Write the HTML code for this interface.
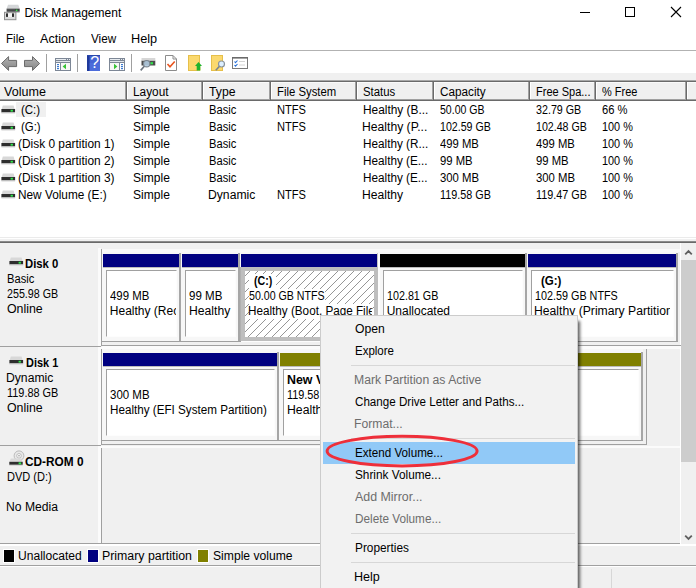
<!DOCTYPE html>
<html><head><meta charset="utf-8"><title>Disk Management</title>
<style>
html,body{margin:0;padding:0;background:#fff}
#w{position:relative;width:696px;height:588px;overflow:hidden;background:#fff;font-family:"Liberation Sans",sans-serif;font-size:12px;color:#000}
#w div,#w svg,#w span{position:absolute;display:block}
#w .t{white-space:pre;line-height:14px;height:14px;transform-origin:0 0}
</style></head><body><div id="w">
<svg style="left:570px;top:0;width:126px;height:28px" viewBox="570 0 126 28"><g stroke="#000" stroke-width="1" fill="none"><path d="M580 12.5H590"/><rect x="625.5" y="7.5" width="9" height="9"/><path d="M671 7L681 17M681 7L671 17" stroke-width="1.1"/></g></svg>
<svg style="left:3px;top:4px;width:18px;height:17px" viewBox="3 4 18 17"><path d="M8 4.8H18.3L19.6 8.6H6.7Z" fill="#d4d6d8"/><rect x="6.6" y="8.6" width="13.1" height="3.2" fill="#3f4142"/><rect x="7" y="9.3" width="8" height="1" fill="#5a5c5e"/><rect x="15.8" y="9.6" width="1.6" height="1.5" fill="#3df04f"/><rect x="15" y="11.8" width="4.7" height="1" fill="#b9bbbd"/><rect x="4.5" y="12.3" width="11.4" height="7.4" fill="#dcdcdc" stroke="#8f8f8f" stroke-width="1"/><rect x="8" y="13.5" width="4" height="3.5" fill="#f4f4f4"/><rect x="6" y="13.4" width="2" height="3.5" fill="#2e2e2e"/><rect x="12" y="13.4" width="2" height="3.5" fill="#2e2e2e"/></svg>
<div style="left:0px;top:50px;width:696px;height:1px;background:#b2b2b2;"></div>
<div style="left:0px;top:73px;width:696px;height:7px;background:#f0f0f0;"></div>
<svg style="left:0;top:51px;width:260px;height:22px" viewBox="0 51 260 22"><defs><linearGradient id="ag" x1="0" y1="0" x2="0" y2="1"><stop offset="0" stop-color="#b4b4b4"/><stop offset="1" stop-color="#858585"/></linearGradient></defs><path d="M1.5 63.5L8.6 56.6V60.4H16.6V66.6H8.6V70.4Z" fill="url(#ag)" stroke="#6a6a6a" stroke-width="1" stroke-linejoin="round"/><path d="M39.6 63.5L32.5 56.6V60.4H24.5V66.6H32.5V70.4Z" fill="url(#ag)" stroke="#6a6a6a" stroke-width="1" stroke-linejoin="round"/><path d="M46.5 54V72M77.5 54V72M131.5 54V72" stroke="#a0a0a0" stroke-width="1"/><rect x="55" y="58" width="16" height="13" fill="#7d8796"/><rect x="56" y="59" width="10" height="1" fill="#e8ecf0"/><rect x="67" y="59" width="1" height="1" fill="#e8ecf0"/><rect x="69" y="59" width="1" height="1" fill="#e8ecf0"/><rect x="56" y="61" width="14" height="1" fill="#dfe3e9"/><rect x="56" y="63" width="4" height="7" fill="#fff"/><rect x="61" y="63" width="9" height="7" fill="#f7f7f7"/><rect x="57" y="64" width="2" height="1.2" fill="#3b7ad0"/><rect x="57" y="66" width="2" height="1.2" fill="#3b7ad0"/><rect x="57" y="68" width="2" height="1.2" fill="#3b7ad0"/><path d="M62.6 66.5L66 63.8V69.2Z" fill="#36c236"/><rect x="87" y="55" width="13" height="16" fill="#4464d4"/><rect x="87" y="55" width="2.6" height="16" fill="#1f3a9c"/><rect x="87" y="55" width="13" height="1" fill="#2a48ac"/><rect x="89.6" y="63" width="10.4" height="8" fill="#5272de" opacity=".6"/><text x="94.7" y="68.3" font-family="Liberation Sans, sans-serif" font-size="16" fill="#fff" text-anchor="middle">?</text><rect x="109" y="58" width="16" height="13" fill="#7d8796"/><rect x="110" y="59" width="10" height="1" fill="#e8ecf0"/><rect x="121" y="59" width="1" height="1" fill="#e8ecf0"/><rect x="123" y="59" width="1" height="1" fill="#e8ecf0"/><rect x="110" y="61" width="14" height="1" fill="#dfe3e9"/><rect x="120" y="63" width="4" height="7" fill="#fff"/><rect x="110" y="63" width="9" height="7" fill="#f7f7f7"/><rect x="121" y="64" width="2" height="1.2" fill="#3b7ad0"/><rect x="121" y="66" width="2" height="1.2" fill="#3b7ad0"/><rect x="121" y="68" width="2" height="1.2" fill="#3b7ad0"/><path d="M117.4 66.5L114 63.8V69.2Z" fill="#36c236"/><rect x="141.5" y="60.5" width="13.8" height="5" fill="#4c4c4c"/><rect x="141.5" y="58" width="13.8" height="2.5" fill="#d6d6d6"/><rect x="150.4" y="62.2" width="2.6" height="2.1" fill="#2fe84a"/><circle cx="146.7" cy="63.7" r="3.2" fill="#b9d3ea" fill-opacity=".85" stroke="#7d8790" stroke-width="1.2"/><path d="M144.3 66.3L140.7 70.4" stroke="#6d7680" stroke-width="1.6"/><path d="M165.5 55.5H173L176.5 59V70.5H165.5Z" fill="#fff" stroke="#8c8c8c"/><path d="M173 55.5V59H176.5" fill="none" stroke="#8c8c8c"/><path d="M167.5 64L170 66.7L174.7 61.5" fill="none" stroke="#e9541d" stroke-width="1.6"/><rect x="188.5" y="55.5" width="11" height="15" fill="#fbd96e" stroke="#e6bf4a"/><path d="M197.5 70.5V66.5H200.5V70.5" fill="#fbd96e"/><path d="M198.5 62L202 66H200.3V70.5H196.7V66H195Z" fill="#1fb32d"/><rect x="211.5" y="55.5" width="11" height="15" fill="#fbd96e" stroke="#e6bf4a"/><circle cx="221.5" cy="64" r="3" fill="#dcefff" stroke="#8a949e" stroke-width="1.2"/><path d="M219.3 66.5L215.8 70.3" stroke="#7a848e" stroke-width="1.6"/><rect x="232.5" y="57.5" width="15" height="11" fill="#fff" stroke="#7a7a7a"/><rect x="232" y="57" width="16" height="1.6" fill="#6a6a6a"/><path d="M234.5 61.5L235.5 62.7L237.5 60.5M234.5 65L235.5 66.2L237.5 64" fill="none" stroke="#2a72d8" stroke-width="1.1"/><path d="M239 61.5H245M239 65H245" stroke="#d4d4d4" stroke-width="1"/></svg>
<div style="left:0px;top:80px;width:696px;height:1px;background:#a8a8a8;"></div>
<div style="left:0px;top:81px;width:696px;height:1px;background:#6a6a6a;"></div>
<div style="left:0px;top:82px;width:696px;height:17px;background:#f0f0f0;"></div>
<div style="left:0px;top:82px;width:696px;height:1px;background:#fafafa;"></div>
<div style="left:0px;top:99px;width:696px;height:1px;background:#a0a0a0;"></div>
<div style="left:0px;top:100px;width:696px;height:1px;background:#6a6a6a;"></div>
<div style="left:125px;top:82px;width:1px;height:18px;background:#a0a0a0;"></div>
<div style="left:126px;top:82px;width:1px;height:19px;background:#6a6a6a;"></div>
<div style="left:127px;top:82px;width:1px;height:17px;background:#fff;"></div>
<div style="left:201px;top:82px;width:1px;height:18px;background:#a0a0a0;"></div>
<div style="left:202px;top:82px;width:1px;height:19px;background:#6a6a6a;"></div>
<div style="left:203px;top:82px;width:1px;height:17px;background:#fff;"></div>
<div style="left:269px;top:82px;width:1px;height:18px;background:#a0a0a0;"></div>
<div style="left:270px;top:82px;width:1px;height:19px;background:#6a6a6a;"></div>
<div style="left:271px;top:82px;width:1px;height:17px;background:#fff;"></div>
<div style="left:355px;top:82px;width:1px;height:18px;background:#a0a0a0;"></div>
<div style="left:356px;top:82px;width:1px;height:19px;background:#6a6a6a;"></div>
<div style="left:357px;top:82px;width:1px;height:17px;background:#fff;"></div>
<div style="left:432px;top:82px;width:1px;height:18px;background:#a0a0a0;"></div>
<div style="left:433px;top:82px;width:1px;height:19px;background:#6a6a6a;"></div>
<div style="left:434px;top:82px;width:1px;height:17px;background:#fff;"></div>
<div style="left:528px;top:82px;width:1px;height:18px;background:#a0a0a0;"></div>
<div style="left:529px;top:82px;width:1px;height:19px;background:#6a6a6a;"></div>
<div style="left:530px;top:82px;width:1px;height:17px;background:#fff;"></div>
<div style="left:594px;top:82px;width:1px;height:18px;background:#a0a0a0;"></div>
<div style="left:595px;top:82px;width:1px;height:19px;background:#6a6a6a;"></div>
<div style="left:596px;top:82px;width:1px;height:17px;background:#fff;"></div>
<div style="left:685px;top:82px;width:1px;height:18px;background:#a0a0a0;"></div>
<div style="left:686px;top:82px;width:1px;height:19px;background:#6a6a6a;"></div>
<div style="left:687px;top:82px;width:1px;height:17px;background:#fff;"></div>
<div style="left:16px;top:102px;width:30px;height:15px;background:#f0f0f0;"></div>
<svg style="left:1px;top:104.6px;width:15px;height:9px" viewBox="0 0 15 9"><path d="M0.8 4L1.8 0.4H12.6L13.6 4Z" fill="#d8d8d8"/><rect x="0.4" y="4" width="13.7" height="3.4" fill="#2e2e2e"/><rect x="0.4" y="7.4" width="13.7" height="1" fill="#c8c8c8"/><rect x="9.6" y="4.8" width="2.3" height="1.8" fill="#2fe84a"/></svg>
<svg style="left:1px;top:121.6px;width:15px;height:9px" viewBox="0 0 15 9"><path d="M0.8 4L1.8 0.4H12.6L13.6 4Z" fill="#d8d8d8"/><rect x="0.4" y="4" width="13.7" height="3.4" fill="#2e2e2e"/><rect x="0.4" y="7.4" width="13.7" height="1" fill="#c8c8c8"/><rect x="9.6" y="4.8" width="2.3" height="1.8" fill="#2fe84a"/></svg>
<svg style="left:1px;top:138.6px;width:15px;height:9px" viewBox="0 0 15 9"><path d="M0.8 4L1.8 0.4H12.6L13.6 4Z" fill="#d8d8d8"/><rect x="0.4" y="4" width="13.7" height="3.4" fill="#2e2e2e"/><rect x="0.4" y="7.4" width="13.7" height="1" fill="#c8c8c8"/><rect x="9.6" y="4.8" width="2.3" height="1.8" fill="#2fe84a"/></svg>
<svg style="left:1px;top:155.6px;width:15px;height:9px" viewBox="0 0 15 9"><path d="M0.8 4L1.8 0.4H12.6L13.6 4Z" fill="#d8d8d8"/><rect x="0.4" y="4" width="13.7" height="3.4" fill="#2e2e2e"/><rect x="0.4" y="7.4" width="13.7" height="1" fill="#c8c8c8"/><rect x="9.6" y="4.8" width="2.3" height="1.8" fill="#2fe84a"/></svg>
<svg style="left:1px;top:172.6px;width:15px;height:9px" viewBox="0 0 15 9"><path d="M0.8 4L1.8 0.4H12.6L13.6 4Z" fill="#d8d8d8"/><rect x="0.4" y="4" width="13.7" height="3.4" fill="#2e2e2e"/><rect x="0.4" y="7.4" width="13.7" height="1" fill="#c8c8c8"/><rect x="9.6" y="4.8" width="2.3" height="1.8" fill="#2fe84a"/></svg>
<svg style="left:1px;top:189.6px;width:15px;height:9px" viewBox="0 0 15 9"><path d="M0.8 4L1.8 0.4H12.6L13.6 4Z" fill="#d8d8d8"/><rect x="0.4" y="4" width="13.7" height="3.4" fill="#2e2e2e"/><rect x="0.4" y="7.4" width="13.7" height="1" fill="#c8c8c8"/><rect x="9.6" y="4.8" width="2.3" height="1.8" fill="#2fe84a"/></svg>
<div style="left:0px;top:237px;width:696px;height:1px;background:#ebebeb;"></div>
<div style="left:0px;top:239px;width:696px;height:2px;background:#f0f0f0;"></div>
<div style="left:0px;top:241px;width:696px;height:1px;background:#8a8a8a;"></div>
<div style="left:0px;top:242px;width:696px;height:1px;background:#696969;"></div>
<div style="left:0px;top:243px;width:696px;height:301px;background:#f0f0f0;"></div>
<div style="left:680px;top:243px;width:1px;height:301px;background:#fff;"></div>
<div style="left:681px;top:243px;width:15px;height:301px;background:#f0f0f0;"></div>
<div style="left:681px;top:260px;width:15px;height:202px;background:#cdcdcd;"></div>
<svg style="left:681px;top:243px;width:15px;height:301px" viewBox="681 243 15 301"><path d="M685.2 254.4L688.5 251.1L691.8 254.4M685.2 535.6L688.5 538.9L691.8 535.6" fill="none" stroke="#606060" stroke-width="1.8"/></svg>
<div style="left:98px;top:248px;width:3px;height:98px;background:#fbfbfb;"></div>
<div style="left:101px;top:249px;width:1px;height:97px;background:#a0a0a0;"></div>
<div style="left:0px;top:346px;width:101px;height:1px;background:#a0a0a0;"></div>
<div style="left:102px;top:249px;width:576px;height:92px;background:#f7f7f7;"></div>
<div style="left:102px;top:341px;width:576px;height:1px;background:#a0a0a0;"></div>
<div style="left:102px;top:345px;width:579px;height:1px;background:#a0a0a0;"></div>
<div style="left:103px;top:254px;width:76px;height:13px;background:#000080;"></div>
<div style="left:103px;top:267px;width:76px;height:1px;background:#bcbcbc;"></div>
<div style="left:179px;top:253px;width:2px;height:88px;background:#a6a6a6;"></div>
<div style="left:106px;top:270px;width:69px;height:65px;background:#fff;border-left:1px solid #a0a0a0;border-top:1px solid #a0a0a0;border-right:1px solid #fdfdfd;border-bottom:1px solid #fdfdfd"></div>
<div style="left:182px;top:254px;width:56px;height:13px;background:#000080;"></div>
<div style="left:182px;top:267px;width:56px;height:1px;background:#bcbcbc;"></div>
<div style="left:238px;top:253px;width:2px;height:88px;background:#a6a6a6;"></div>
<div style="left:185px;top:270px;width:49px;height:65px;background:#fff;border-left:1px solid #a0a0a0;border-top:1px solid #a0a0a0;border-right:1px solid #fdfdfd;border-bottom:1px solid #fdfdfd"></div>
<div style="left:241px;top:254px;width:136px;height:13px;background:#000080;"></div>
<div style="left:241px;top:267px;width:136px;height:1px;background:#bcbcbc;"></div>
<div style="left:377px;top:253px;width:1px;height:14px;background:#c4c4c4;"></div>
<div style="left:378px;top:253px;width:2px;height:88px;background:#fdfdfd;"></div>
<div style="left:240px;top:267px;width:1px;height:74px;background:#b0b0b0;"></div>
<div style="left:241px;top:341px;width:137px;height:1px;background:#fcfcfc;"></div>
<div style="left:241px;top:267px;width:129px;height:66px;border:4px solid #bebebe;background:#fff repeating-linear-gradient(135deg,transparent 0,transparent 2.83px,#969696 2.83px,#969696 3.54px,transparent 3.54px,transparent 5.657px)"></div>
<div style="left:380px;top:254px;width:145px;height:13px;background:#000;"></div>
<div style="left:380px;top:267px;width:145px;height:1px;background:#bcbcbc;"></div>
<div style="left:525px;top:253px;width:2px;height:88px;background:#a6a6a6;"></div>
<div style="left:383px;top:270px;width:138px;height:65px;background:#fff;border-left:1px solid #a0a0a0;border-top:1px solid #a0a0a0;border-right:1px solid #fdfdfd;border-bottom:1px solid #fdfdfd"></div>
<div style="left:528px;top:254px;width:148px;height:13px;background:#000080;"></div>
<div style="left:528px;top:267px;width:148px;height:1px;background:#bcbcbc;"></div>
<div style="left:676px;top:253px;width:2px;height:88px;background:#a6a6a6;"></div>
<div style="left:531px;top:270px;width:141px;height:65px;background:#fff;border-left:1px solid #a0a0a0;border-top:1px solid #a0a0a0;border-right:1px solid #fdfdfd;border-bottom:1px solid #fdfdfd"></div>
<div style="left:98px;top:347px;width:3px;height:98px;background:#fbfbfb;"></div>
<div style="left:101px;top:348px;width:1px;height:97px;background:#a0a0a0;"></div>
<div style="left:0px;top:445px;width:101px;height:1px;background:#a0a0a0;"></div>
<div style="left:102px;top:348px;width:541px;height:92px;background:#f7f7f7;"></div>
<div style="left:102px;top:440px;width:541px;height:1px;background:#a0a0a0;"></div>
<div style="left:102px;top:444px;width:545px;height:1px;background:#a0a0a0;"></div>
<div style="left:646px;top:347px;width:1px;height:97px;background:#a0a0a0;"></div>
<div style="left:103px;top:353px;width:174px;height:13px;background:#000080;"></div>
<div style="left:103px;top:366px;width:174px;height:1px;background:#bcbcbc;"></div>
<div style="left:277px;top:352px;width:2px;height:88px;background:#a6a6a6;"></div>
<div style="left:106px;top:369px;width:167px;height:65px;background:#fff;border-left:1px solid #a0a0a0;border-top:1px solid #a0a0a0;border-right:1px solid #fdfdfd;border-bottom:1px solid #fdfdfd"></div>
<div style="left:280px;top:353px;width:361px;height:13px;background:#808000;"></div>
<div style="left:280px;top:366px;width:361px;height:1px;background:#bcbcbc;"></div>
<div style="left:641px;top:352px;width:2px;height:88px;background:#a6a6a6;"></div>
<div style="left:283px;top:369px;width:354px;height:65px;background:#fff;border-left:1px solid #a0a0a0;border-top:1px solid #a0a0a0;border-right:1px solid #fdfdfd;border-bottom:1px solid #fdfdfd"></div>
<div style="left:98px;top:446px;width:3px;height:98px;background:#fbfbfb;"></div>
<div style="left:101px;top:447px;width:1px;height:97px;background:#a0a0a0;"></div>
<div style="left:0px;top:544px;width:101px;height:1px;background:#a0a0a0;"></div>
<div style="left:102px;top:346px;width:578px;height:3px;background:#fbfbfb;"></div>
<div style="left:102px;top:446px;width:578px;height:2px;background:#fbfbfb;"></div>
<div style="left:101px;top:347px;width:1px;height:2px;background:#fbfbfb;"></div>
<div style="left:101px;top:446px;width:1px;height:2px;background:#fbfbfb;"></div>
<div style="left:102px;top:249px;width:578px;height:3px;background:#f9f9f9;"></div>
<div style="left:0px;top:543px;width:680px;height:1px;background:#a0a0a0;"></div>
<div style="left:0px;top:544px;width:696px;height:2px;background:#fff;"></div>
<div style="left:0px;top:546px;width:696px;height:19px;background:#f0f0f0;"></div>
<div style="left:3px;top:549px;width:12px;height:14px;background:#fff;"></div>
<div style="left:4px;top:550px;width:10px;height:12px;background:#000;"></div>
<div style="left:87px;top:549px;width:12px;height:14px;background:#fff;"></div>
<div style="left:88px;top:550px;width:10px;height:12px;background:#000080;"></div>
<div style="left:197px;top:549px;width:12px;height:14px;background:#fff;"></div>
<div style="left:198px;top:550px;width:10px;height:12px;background:#808000;"></div>
<div style="left:0px;top:565px;width:696px;height:1px;background:#a0a0a0;"></div>
<div style="left:0px;top:566px;width:696px;height:1px;background:#fff;"></div>
<div style="left:0px;top:567px;width:696px;height:21px;background:#f0f0f0;"></div>
<div style="left:526px;top:569px;width:1px;height:19px;background:#d7d7d7;"></div>
<div style="left:611px;top:569px;width:1px;height:19px;background:#d7d7d7;"></div>
<svg style="left:8.6px;top:256.6px;width:15px;height:9px" viewBox="0 0 15 9"><path d="M0.8 4L1.8 0.4H12.6L13.6 4Z" fill="#d8d8d8"/><rect x="0.4" y="4" width="13.7" height="3.4" fill="#2e2e2e"/><rect x="0.4" y="7.4" width="13.7" height="1" fill="#c8c8c8"/><rect x="9.6" y="4.8" width="2.3" height="1.8" fill="#2fe84a"/></svg>
<svg style="left:8.6px;top:355.6px;width:15px;height:9px" viewBox="0 0 15 9"><path d="M0.8 4L1.8 0.4H12.6L13.6 4Z" fill="#d8d8d8"/><rect x="0.4" y="4" width="13.7" height="3.4" fill="#2e2e2e"/><rect x="0.4" y="7.4" width="13.7" height="1" fill="#c8c8c8"/><rect x="9.6" y="4.8" width="2.3" height="1.8" fill="#2fe84a"/></svg>
<svg style="left:8px;top:449px;width:17px;height:17px" viewBox="8 449 17 17"><circle cx="19" cy="455.8" r="4.9" fill="#e9e9e9" stroke="#b4b4b4" stroke-width=".9"/><circle cx="19" cy="455.8" r="2.3" fill="#fafafa" stroke="#a8a8a8" stroke-width=".7"/><circle cx="19" cy="455.8" r=".8" fill="#9a9a9a"/><path d="M9.6 461.8L10.8 458.6H21.2L22.4 461.8Z" fill="#d9d9d9"/><rect x="9.3" y="461.8" width="13.4" height="3" fill="#2e2e2e"/><rect x="9.3" y="464.8" width="13.4" height=".8" fill="#c8c8c8"/><rect x="18.6" y="462.4" width="2.6" height="1.9" fill="#2fe84a"/></svg>
<div style="left:248.5px;top:274px;width:27px;height:15px;background:#fff;"></div>
<div style="left:248.5px;top:289px;width:76.5px;height:15px;background:#fff;"></div>
<div style="left:248.5px;top:304px;width:123.5px;height:15px;background:#fff;"></div>
<span class="t" style="left:24.50px;top:6.00px;">Disk Management</span>
<span class="t" style="left:5.94px;top:32.00px;transform:scaleX(0.9634);">File</span>
<span class="t" style="left:40.20px;top:32.00px;transform:scaleX(1.0483);">Action</span>
<span class="t" style="left:90.88px;top:32.00px;transform:scaleX(0.9756);">View</span>
<span class="t" style="left:131.44px;top:32.00px;transform:scaleX(1.0595);">Help</span>
<span class="t" style="left:4.17px;top:85.00px;transform:scaleX(1.0463);">Volume</span>
<span class="t" style="left:132.51px;top:85.00px;transform:scaleX(0.9857);">Layout</span>
<span class="t" style="left:208.75px;top:85.00px;transform:scaleX(1.0178);">Type</span>
<span class="t" style="left:276.56px;top:85.00px;transform:scaleX(0.9446);">File System</span>
<span class="t" style="left:362.91px;top:85.00px;transform:scaleX(0.9455);">Status</span>
<span class="t" style="left:439.89px;top:85.00px;transform:scaleX(0.9783);">Capacity</span>
<span class="t" style="left:535.58px;top:85.00px;transform:scaleX(0.9170);">Free Spa...</span>
<span class="t" style="left:602.16px;top:85.00px;transform:scaleX(0.9139);">% Free</span>
<span class="t" style="left:21.28px;top:103.00px;transform:scaleX(0.9568);">(C:)</span>
<span class="t" style="left:132.67px;top:103.00px;transform:scaleX(1.0056);">Simple</span>
<span class="t" style="left:208.57px;top:103.00px;transform:scaleX(0.9286);">Basic</span>
<span class="t" style="left:276.58px;top:103.00px;transform:scaleX(0.9244);">NTFS</span>
<span class="t" style="left:362.51px;top:103.00px;transform:scaleX(0.9894);">Healthy (B...</span>
<span class="t" style="left:440.06px;top:103.00px;transform:scaleX(0.8788);">50.00 GB</span>
<span class="t" style="left:536.05px;top:103.00px;transform:scaleX(0.8929);">32.79 GB</span>
<span class="t" style="left:601.92px;top:103.00px;transform:scaleX(0.9333);">66 %</span>
<span class="t" style="left:21.29px;top:120.00px;transform:scaleX(0.9516);">(G:)</span>
<span class="t" style="left:132.67px;top:120.00px;transform:scaleX(1.0056);">Simple</span>
<span class="t" style="left:208.57px;top:120.00px;transform:scaleX(0.9286);">Basic</span>
<span class="t" style="left:276.58px;top:120.00px;transform:scaleX(0.9244);">NTFS</span>
<span class="t" style="left:362.49px;top:120.00px;transform:scaleX(1.0132);">Healthy (P...</span>
<span class="t" style="left:440.22px;top:120.00px;transform:scaleX(0.8859);">102.59 GB</span>
<span class="t" style="left:536.22px;top:120.00px;transform:scaleX(0.8859);">102.48 GB</span>
<span class="t" style="left:602.21px;top:120.00px;transform:scaleX(0.9069);">100 %</span>
<span class="t" style="left:17.86px;top:137.00px;transform:scaleX(0.9919);">(Disk 0 partition 1)</span>
<span class="t" style="left:132.67px;top:137.00px;transform:scaleX(1.0056);">Simple</span>
<span class="t" style="left:208.57px;top:137.00px;transform:scaleX(0.9286);">Basic</span>
<span class="t" style="left:362.52px;top:137.00px;transform:scaleX(0.9779);">Healthy (R...</span>
<span class="t" style="left:440.27px;top:137.00px;transform:scaleX(0.9383);">499 MB</span>
<span class="t" style="left:536.27px;top:137.00px;transform:scaleX(0.9383);">499 MB</span>
<span class="t" style="left:602.21px;top:137.00px;transform:scaleX(0.9069);">100 %</span>
<span class="t" style="left:17.86px;top:154.00px;transform:scaleX(0.9919);">(Disk 0 partition 2)</span>
<span class="t" style="left:132.67px;top:154.00px;transform:scaleX(1.0056);">Simple</span>
<span class="t" style="left:208.57px;top:154.00px;transform:scaleX(0.9286);">Basic</span>
<span class="t" style="left:362.52px;top:154.00px;transform:scaleX(0.9785);">Healthy (E...</span>
<span class="t" style="left:440.03px;top:154.00px;transform:scaleX(0.9403);">99 MB</span>
<span class="t" style="left:536.03px;top:154.00px;transform:scaleX(0.9403);">99 MB</span>
<span class="t" style="left:602.21px;top:154.00px;transform:scaleX(0.9069);">100 %</span>
<span class="t" style="left:17.86px;top:171.00px;transform:scaleX(0.9919);">(Disk 1 partition 3)</span>
<span class="t" style="left:132.67px;top:171.00px;transform:scaleX(1.0056);">Simple</span>
<span class="t" style="left:208.57px;top:171.00px;transform:scaleX(0.9286);">Basic</span>
<span class="t" style="left:362.52px;top:171.00px;transform:scaleX(0.9785);">Healthy (E...</span>
<span class="t" style="left:440.03px;top:171.00px;transform:scaleX(0.9441);">300 MB</span>
<span class="t" style="left:536.03px;top:171.00px;transform:scaleX(0.9441);">300 MB</span>
<span class="t" style="left:602.21px;top:171.00px;transform:scaleX(0.9069);">100 %</span>
<span class="t" style="left:17.82px;top:188.00px;transform:scaleX(0.9847);">New Volume (E:)</span>
<span class="t" style="left:132.67px;top:188.00px;transform:scaleX(1.0056);">Simple</span>
<span class="t" style="left:208.49px;top:188.00px;transform:scaleX(1.0138);">Dynamic</span>
<span class="t" style="left:276.58px;top:188.00px;transform:scaleX(0.9244);">NTFS</span>
<span class="t" style="left:362.49px;top:188.00px;transform:scaleX(1.0095);">Healthy</span>
<span class="t" style="left:440.21px;top:188.00px;transform:scaleX(0.9000);">119.58 GB</span>
<span class="t" style="left:536.21px;top:188.00px;transform:scaleX(0.9000);">119.47 GB</span>
<span class="t" style="left:602.21px;top:188.00px;transform:scaleX(0.9069);">100 %</span>
<span class="t" style="left:25.49px;top:257.00px;transform:scaleX(0.9436);font-weight:bold;">Disk 0</span>
<span class="t" style="left:6.57px;top:272.00px;transform:scaleX(0.9286);">Basic</span>
<span class="t" style="left:6.94px;top:287.00px;transform:scaleX(0.8909);">255.98 GB</span>
<span class="t" style="left:6.86px;top:302.00px;transform:scaleX(1.0299);">Online</span>
<span class="t" style="left:25.52px;top:356.00px;transform:scaleX(0.9109);font-weight:bold;">Disk 1</span>
<span class="t" style="left:6.49px;top:371.00px;transform:scaleX(1.0138);">Dynamic</span>
<span class="t" style="left:6.70px;top:386.00px;transform:scaleX(0.9091);">119.88 GB</span>
<span class="t" style="left:6.86px;top:401.00px;transform:scaleX(1.0299);">Online</span>
<span class="t" style="left:24.91px;top:455.00px;transform:scaleX(0.9867);font-weight:bold;">CD-ROM 0</span>
<span class="t" style="left:6.78px;top:470.00px;transform:scaleX(0.9195);">DVD (D:)</span>
<span class="t" style="left:6.49px;top:500.00px;transform:scaleX(1.0124);">No Media</span>
<span class="t" style="left:109.76px;top:288.50px;transform:scaleX(0.9506);">499 MB</span>
<span class="t" style="left:109.80px;top:303.50px;width:66.20px;overflow:hidden;">Healthy (Recovery Partition)</span>
<span class="t" style="left:189.02px;top:288.50px;transform:scaleX(0.9612);">99 MB</span>
<span class="t" style="left:189.09px;top:303.50px;transform:scaleX(1.0145);">Healthy</span>
<span class="t" style="left:253.95px;top:273.50px;transform:scaleX(0.8877);font-weight:bold;">(C:)</span>
<span class="t" style="left:248.56px;top:288.50px;transform:scaleX(0.8853);">50.00 GB NTFS</span>
<span class="t" style="left:248.03px;top:303.50px;transform:scaleX(0.9750);width:126.95px;overflow:hidden;">Healthy (Boot, Page File, Crash Dump, Primary Partition)</span>
<span class="t" style="left:386.72px;top:288.50px;transform:scaleX(0.8949);">102.81 GB</span>
<span class="t" style="left:386.63px;top:303.50px;">Unallocated</span>
<span class="t" style="left:540.90px;top:273.50px;transform:scaleX(0.9590);font-weight:bold;">(G:)</span>
<span class="t" style="left:534.71px;top:288.50px;transform:scaleX(0.8993);">102.59 GB NTFS</span>
<span class="t" style="left:534.49px;top:303.50px;transform:scaleX(1.0144);width:133.59px;overflow:hidden;">Healthy (Primary Partition)</span>
<span class="t" style="left:109.52px;top:387.50px;transform:scaleX(0.9565);">300 MB</span>
<span class="t" style="left:109.73px;top:402.50px;transform:scaleX(0.9717);">Healthy (EFI System Partition)</span>
<span class="t" style="left:287.23px;top:372.50px;transform:scaleX(1.0330);font-weight:bold;">New Volume (E:)</span>
<span class="t" style="left:287.41px;top:387.50px;transform:scaleX(0.9050);">119.58 GB NTFS</span>
<span class="t" style="left:287.18px;top:402.50px;transform:scaleX(1.0196);">Healthy</span>
<span class="t" style="left:18.42px;top:548.50px;transform:scaleX(1.0057);">Unallocated</span>
<span class="t" style="left:102.27px;top:548.50px;transform:scaleX(1.0289);">Primary partition</span>
<span class="t" style="left:212.97px;top:548.50px;transform:scaleX(1.0116);">Simple volume</span>
<div style="left:320px;top:315px;width:258px;height:273px;background:#f2f2f2;border-left:1px solid #ccc;border-top:1px solid #ccc;border-right:1px solid #ccc;box-sizing:border-box;box-shadow:3px 5px 3px -1px rgba(0,0,0,.62)"></div>
<div style="left:351px;top:365px;width:224px;height:1px;background:#d7d7d7;"></div>
<div style="left:351px;top:438px;width:224px;height:1px;background:#d7d7d7;"></div>
<div style="left:351px;top:533px;width:224px;height:1px;background:#d7d7d7;"></div>
<div style="left:351px;top:562px;width:224px;height:1px;background:#d7d7d7;"></div>
<div style="left:323px;top:442px;width:252px;height:22px;background:#91c9f7;"></div>
<span class="t" style="left:354.87px;top:322.00px;transform:scaleX(1.0143);">Open</span>
<span class="t" style="left:354.54px;top:344.00px;transform:scaleX(0.9585);">Explore</span>
<span class="t" style="left:354.48px;top:373.00px;transform:scaleX(1.0155);color:#6d6d6d;">Mark Partition as Active</span>
<span class="t" style="left:354.89px;top:395.00px;transform:scaleX(0.9682);">Change Drive Letter and Paths...</span>
<span class="t" style="left:354.49px;top:417.00px;transform:scaleX(1.0136);color:#6d6d6d;">Format...</span>
<span class="t" style="left:354.53px;top:446.00px;transform:scaleX(0.9704);">Extend Volume...</span>
<span class="t" style="left:354.89px;top:468.00px;transform:scaleX(0.9834);">Shrink Volume...</span>
<span class="t" style="left:355.00px;top:490.00px;transform:scaleX(1.0335);color:#6d6d6d;">Add Mirror...</span>
<span class="t" style="left:354.52px;top:512.00px;transform:scaleX(0.9791);color:#6d6d6d;">Delete Volume...</span>
<span class="t" style="left:354.51px;top:541.00px;transform:scaleX(0.9859);">Properties</span>
<span class="t" style="left:354.45px;top:570.00px;transform:scaleX(1.0465);">Help</span>
<svg style="left:320px;top:430px;width:170px;height:42px" viewBox="320 430 170 42"><ellipse cx="402.1" cy="451.1" rx="75" ry="14.8" fill="none" stroke="#ee2f3a" stroke-width="3"/></svg>
</div></body></html>
